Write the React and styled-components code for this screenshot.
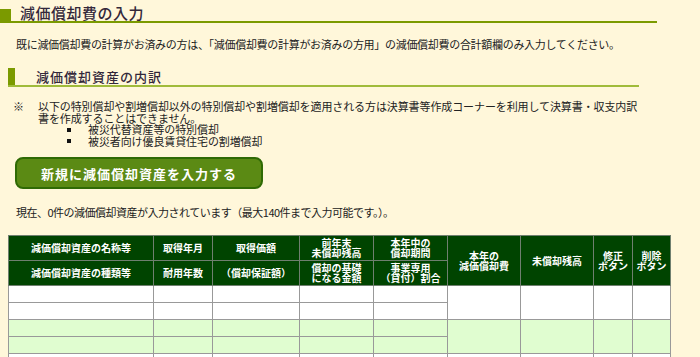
import React from "react";
import styled, { createGlobalStyle } from "styled-components";

const GlobalStyle = createGlobalStyle`
  html, body {
    margin: 0;
    padding: 0;
    overflow: hidden;
    background: #fff7da;
  }
  body {
    font-family: "Noto Sans CJK JP", "Noto Sans", sans-serif;
    color: #222;
  }
`;

const Page = styled.div`
  display: flex;
  flex-direction: column;
  align-items: flex-start;
  width: 700px;
`;

const MainTitle = styled.h1`
  display: flex;
  align-items: flex-end;
  width: 657px;
  margin: 0;
  padding-top: 5px;
  border-bottom: 2px solid #7b9a00;
  font-size: 15px;
  line-height: 16px;
  font-weight: 500;
  letter-spacing: 0.5px;
  color: #33283a;

  &::before {
    content: "";
    width: 11px;
    height: 12px;
    margin-right: 9px;
    background: #7b9a00;
  }
`;

const SubTitle = styled.h2`
  display: flex;
  align-items: flex-end;
  width: 631px;
  margin: 17px 0 0 8px;
  border-bottom: 2px solid #a0bb3a;
  font-size: 13px;
  line-height: 16px;
  font-weight: 500;
  letter-spacing: 1px;
  color: #33283a;

  &::before {
    content: "";
    width: 7px;
    height: 17px;
    margin-right: 21px;
    background: #7b9a00;
  }
`;

const Text = styled.p`
  margin: ${(p) => p.$top}px 0 0 16px;
  font-size: 11px;
  line-height: 14px;
  letter-spacing: ${(p) => p.$spacing}px;
  white-space: nowrap;
`;

const Note = styled.div`
  display: flex;
  margin: 14px 0 0 13px;
  font-size: 11px;
  line-height: 11.5px;
  letter-spacing: -0.1px;
  white-space: nowrap;
`;

const NoteMark = styled.span`
  width: 25px;
`;

const NoteBody = styled.div`
  display: flex;
  flex-direction: column;
`;

const BulletList = styled.ul`
  margin: 0;
  padding: 0 0 0 50px;
  list-style: none;
`;

const Bullet = styled.li`
  display: flex;
  align-items: center;

  &::before {
    content: "";
    width: 4px;
    height: 4px;
    margin: 0 17px 0 -21px;
    background: #111;
  }
`;

const NewButton = styled.button`
  margin: 10px 0 0 15px;
  width: 248px;
  height: 32px;
  padding: 0;
  border: 2px solid #2f6a04;
  border-radius: 8px;
  background: #5b8a14;
  color: #fff;
  font-family: inherit;
  font-size: 13px;
  font-weight: bold;
  letter-spacing: 1px;
  cursor: pointer;
`;

const AssetTable = styled.table`
  margin: 16px 0 0 8px;
  width: 662px;
  table-layout: fixed;
  border-collapse: collapse;
  border: 1px solid #8f8f8f;
`;

const HeadCell = styled.th`
  height: ${(p) => (p.rowSpan === 2 ? 49 : 24)}px;
  padding: 0;
  border: 1px solid #6f7f6f;
  background: #004400;
  color: #fff;
  font-size: 10px;
  line-height: 10px;
  font-weight: bold;
  text-align: center;
  vertical-align: middle;
  white-space: pre-line;
`;

const BodyRow = styled.tr`
  background: ${(p) => (p.$green ? "#e0fdd0" : "#ffffff")};
`;

const BodyCell = styled.td`
  height: 16px;
  padding: 0;
  border: 1px solid #999;
`;

const widths = [145, 59, 87, 74, 74, 73, 73, 39, 38];

const headTop = [
  { label: "減価償却資産の名称等" },
  { label: "取得年月" },
  { label: "取得価額" },
  { label: "前年末\n未償却残高" },
  { label: "本年中の\n償却期間" },
  { label: "本年の\n減価償却費", span: 2 },
  { label: "未償却残高", span: 2 },
  { label: "修正\nボタン", span: 2 },
  { label: "削除\nボタン", span: 2 },
];

const headBottom = [
  "減価償却資産の種類等",
  "耐用年数",
  "（償却保証額）",
  "償却の基礎\nになる金額",
  "事業専用\n（貸付）割合",
];

function App() {
  const assets = [0, 1, 2, 3];

  return (
    <>
      <GlobalStyle />
      <Page>
        <MainTitle>減価償却費の入力</MainTitle>
        <Text $top={14} $spacing={-0.3}>
          既に減価償却費の計算がお済みの方は、「減価償却費の計算がお済みの方用」の減価償却費の合計額欄のみ入力してください。
        </Text>

        <SubTitle>減価償却資産の内訳</SubTitle>
        <Note>
          <NoteMark>※</NoteMark>
          <NoteBody>
            <span>
              以下の特別償却や割増償却以外の特別償却や割増償却を適用される方は決算書等作成コーナーを利用して決算書・収支内訳
              <br />
              書を作成することはできません。
            </span>
            <BulletList>
              <Bullet>被災代替資産等の特別償却</Bullet>
              <Bullet>被災者向け優良賃貸住宅の割増償却</Bullet>
            </BulletList>
          </NoteBody>
        </Note>

        <NewButton>新規に減価償却資産を入力する</NewButton>

        <Text $top={16} $spacing={-0.5}>
          現在、0件の減価償却資産が入力されています（最大140件まで入力可能です。）。
        </Text>

        <AssetTable>
          <colgroup>
            {widths.map((w, i) => (
              <col key={i} style={{ width: w }} />
            ))}
          </colgroup>
          <thead>
            <tr>
              {headTop.map((h) => (
                <HeadCell key={h.label} rowSpan={h.span || 1}>
                  {h.label}
                </HeadCell>
              ))}
            </tr>
            <tr>
              {headBottom.map((label) => (
                <HeadCell key={label}>{label}</HeadCell>
              ))}
            </tr>
          </thead>
          <tbody>
            {assets.map((a) => (
              <React.Fragment key={a}>
                <BodyRow $green={a % 2 === 1}>
                  {widths.map((_, i) => (
                    <BodyCell key={i} rowSpan={i >= 5 ? 2 : 1} />
                  ))}
                </BodyRow>
                <BodyRow $green={a % 2 === 1}>
                  {widths.slice(0, 5).map((_, i) => (
                    <BodyCell key={i} />
                  ))}
                </BodyRow>
              </React.Fragment>
            ))}
          </tbody>
        </AssetTable>
      </Page>
    </>
  );
}

export default App;
